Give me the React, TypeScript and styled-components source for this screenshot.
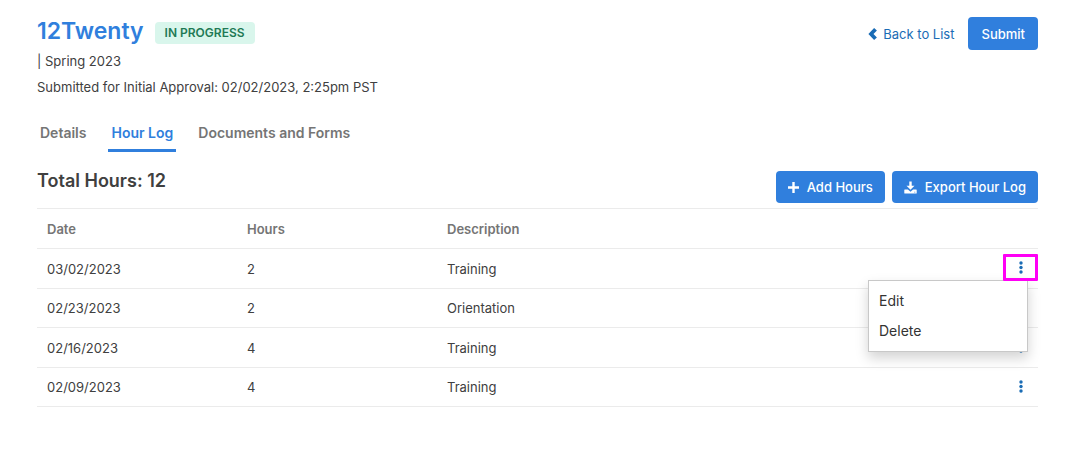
import React from "react";
import styled, { createGlobalStyle, css } from "styled-components";

const blue = "#307fdd";
const linkBlue = "#1a6cb5";
const line = "#ebebeb";

const GlobalStyle = createGlobalStyle`
  *, *::before, *::after { box-sizing: border-box; }
  body {
    margin: 0;
    background: #fff;
    color: #404040;
    font-family: Inter, "Liberation Sans", sans-serif;
    font-size: 13px;
    line-height: 20px;
  }
  button { font: inherit; cursor: pointer; }
`;

const Page = styled.main`
  padding: 17px 37px 40px;
`;

const Header = styled.header`
  display: flex;
  justify-content: space-between;
  align-items: flex-start;
`;

const TitleRow = styled.div`
  display: flex;
  align-items: flex-start;
  gap: 11px;
  height: 31px;
`;

const Title = styled.h1`
  margin: 0;
  color: ${blue};
  font-size: 23px;
  font-weight: 600;
  line-height: 28px;
`;

const Badge = styled.span`
  margin-top: 5px;
  padding: 0 10px;
  border-radius: 4px;
  background: #d9f6ec;
  color: #1f7a55;
  font-size: 12px;
  font-weight: 600;
  line-height: 22px;
`;

const Meta = styled.p`
  margin: 0;
  padding: 3px 0;
`;

const Actions = styled.div<{ $gap: number }>`
  display: flex;
  align-items: center;
  gap: ${({ $gap }) => $gap}px;
`;

const BackLink = styled.a`
  display: flex;
  align-items: center;
  gap: 6px;
  color: ${linkBlue};
  text-decoration: none;
`;

const Button = styled.button`
  display: inline-flex;
  align-items: center;
  gap: 8px;
  height: 32px;
  padding: 0 12px;
  border: 0;
  border-radius: 4px;
  background: ${blue};
  color: #fff;
  font-weight: 500;
  white-space: nowrap;
`;

const SubmitButton = styled(Button)`
  height: 33px;
  padding: 0 13px;
`;

const Tabs = styled.nav`
  display: flex;
  gap: 19px;
  margin-top: 23px;
`;

const Tab = styled.a<{ $active?: boolean }>`
  padding: 0 3px 6px;
  border-bottom: 3px solid transparent;
  color: #757575;
  font-size: 14px;
  font-weight: 600;
  text-decoration: none;
  ${({ $active }) =>
    $active &&
    css`
      border-color: ${blue};
      color: ${blue};
    `}
`;

const SectionHead = styled.div`
  display: flex;
  justify-content: space-between;
  align-items: flex-end;
  margin: 19px 0 5px;
`;

const SectionTitle = styled.h2`
  margin: 0;
  align-self: flex-start;
  font-size: 18px;
  font-weight: 600;
`;

const Table = styled.table`
  width: 100%;
  table-layout: fixed;
  border-spacing: 0;
  border-top: 1px solid ${line};
`;

const Row = styled.tr`
  height: 40px;
  tbody > &:nth-child(even) {
    height: 39px;
  }
`;

const cell = css`
  padding: 0 10px;
  border-bottom: 1px solid ${line};
  text-align: left;
`;

const HeadCell = styled.th<{ $width?: number }>`
  ${cell}
  width: ${({ $width }) => ($width ? `${$width}px` : "auto")};
  color: #757575;
  font-weight: 600;
`;

const Cell = styled.td`
  ${cell}
`;

const ActionCell = styled.td`
  ${cell}
  position: relative;
  padding: 0 0 2px;
`;

const MoreButton = styled.button<{ $marked?: boolean }>`
  position: relative;
  z-index: ${({ $marked }) => ($marked ? 3 : 0)};
  display: flex;
  align-items: center;
  justify-content: center;
  width: 100%;
  height: 27px;
  padding: 0;
  border: 3px solid ${({ $marked }) => ($marked ? "#ff00f5" : "transparent")};
  border-radius: 1px;
  background: none;
  color: ${linkBlue};
`;

const Menu = styled.div`
  position: absolute;
  z-index: 2;
  top: 31px;
  right: 10px;
  display: flex;
  flex-direction: column;
  width: 160px;
  padding: 5px 0;
  border: 1px solid #c8c8c8;
  background: #fff;
  box-shadow: 0 6px 12px rgba(0, 0, 0, 0.175);
`;

const MenuItem = styled.button`
  height: 30px;
  padding: 0 10px;
  border: 0;
  background: none;
  color: #333;
  font-size: 14px;
  text-align: left;
`;

const ChevronIcon = () => (
  <svg width="9" height="12" viewBox="0 0 9 12" aria-hidden="true">
    <path d="M6.1 0 8.9 2.5 5.5 6l3.4 3.5L6.1 12 0.4 6z" fill="currentColor" />
  </svg>
);

const PlusIcon = () => (
  <svg width="11" height="11" viewBox="0 0 11 11" aria-hidden="true">
    <path d="M4.3 0h2.4v4.3H11v2.4H6.7V11H4.3V6.7H0V4.3h4.3z" fill="currentColor" />
  </svg>
);

const DownloadIcon = () => (
  <svg width="13" height="13" viewBox="0 0 13 13" aria-hidden="true">
    <path d="M5.3 0.5h2.4v4.2h2.8L6.5 8.8 2.5 4.7h2.8z" fill="currentColor" />
    <path
      d="M0.8 8.5h3.1l2.6 2.2 2.6-2.2h3.1q.5 0 .5.5v3q0 .6-.6.6H.9q-.6 0-.6-.6V9q0-.5.5-.5zM10.3 10.7v.9h1v-.9z"
      fill="currentColor"
      fillRule="evenodd"
    />
  </svg>
);

const DotsIcon = () => (
  <svg width="4" height="13" viewBox="0 0 4 13" fill="currentColor" aria-hidden="true">
    <circle cx="2" cy="2" r="1.7" />
    <circle cx="2" cy="6.5" r="1.7" />
    <circle cx="2" cy="11" r="1.7" />
  </svg>
);

const entries = [
  { date: "03/02/2023", hours: 2, description: "Training" },
  { date: "02/23/2023", hours: 2, description: "Orientation" },
  { date: "02/16/2023", hours: 4, description: "Training" },
  { date: "02/09/2023", hours: 4, description: "Training" },
];

export default function App() {
  return (
    <>
      <GlobalStyle />
      <Page>
        <Header>
          <div>
            <TitleRow>
              <Title>12Twenty</Title>
              <Badge>IN PROGRESS</Badge>
            </TitleRow>
            <Meta>| Spring 2023</Meta>
            <Meta>Submitted for Initial Approval: 02/02/2023, 2:25pm PST</Meta>
          </div>
          <Actions $gap={14}>
            <BackLink href="#list">
              <ChevronIcon />
              Back to List
            </BackLink>
            <SubmitButton type="button">Submit</SubmitButton>
          </Actions>
        </Header>

        <Tabs>
          <Tab href="#details">Details</Tab>
          <Tab href="#hours" $active aria-current="page">
            Hour Log
          </Tab>
          <Tab href="#documents">Documents and Forms</Tab>
        </Tabs>

        <SectionHead>
          <SectionTitle>Total Hours: 12</SectionTitle>
          <Actions $gap={7}>
            <Button type="button">
              <PlusIcon />
              Add Hours
            </Button>
            <Button type="button">
              <DownloadIcon />
              Export Hour Log
            </Button>
          </Actions>
        </SectionHead>

        <Table>
          <thead>
            <Row>
              <HeadCell $width={200}>Date</HeadCell>
              <HeadCell $width={200}>Hours</HeadCell>
              <HeadCell>Description</HeadCell>
              <HeadCell $width={35} aria-label="Actions" />
            </Row>
          </thead>
          <tbody>
            {entries.map((entry, i) => (
              <Row key={entry.date}>
                <Cell>{entry.date}</Cell>
                <Cell>{entry.hours}</Cell>
                <Cell>{entry.description}</Cell>
                <ActionCell>
                  <MoreButton type="button" $marked={i === 0} aria-label="More actions">
                    <DotsIcon />
                  </MoreButton>
                  {i === 0 && (
                    <Menu>
                      <MenuItem type="button">Edit</MenuItem>
                      <MenuItem type="button">Delete</MenuItem>
                    </Menu>
                  )}
                </ActionCell>
              </Row>
            ))}
          </tbody>
        </Table>
      </Page>
    </>
  );
}
